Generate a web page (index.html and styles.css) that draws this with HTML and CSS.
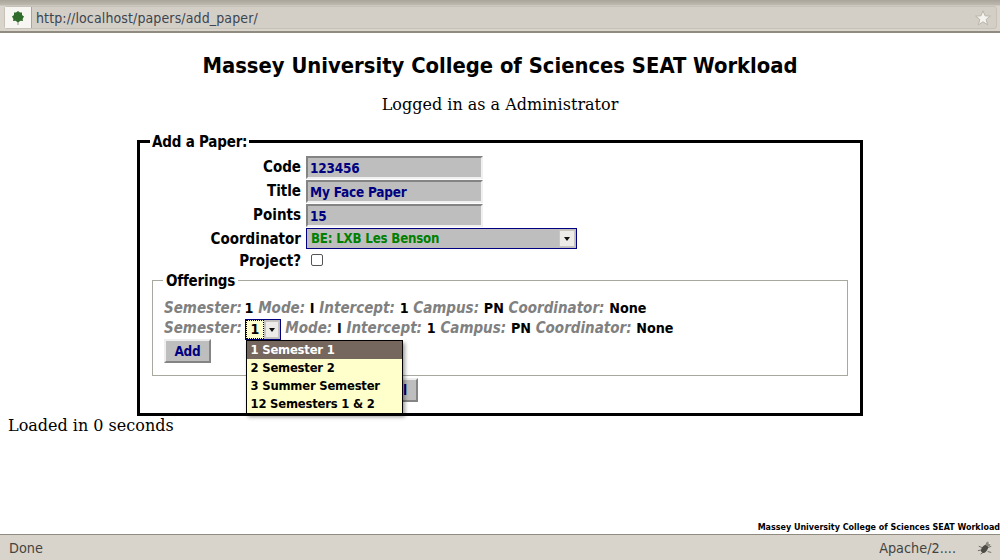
FILE: index.html
```html
<!DOCTYPE html>
<html lang="en">
<head>
<meta charset="utf-8">
<title>Massey University College of Sciences SEAT Workload</title>
<link rel="stylesheet" href="styles.css">
</head>
<body>
<header class="browser-bar">
  <div class="url-box">
    <span class="site-icon">
      <svg width="16" height="16" viewBox="0 0 16 16"><path fill="#8a9a80" d="M7.5 11h1v4h-1z"/><path fill="#2f6b2a" d="M8 1 10 2.6 12 2.4 12 5 14 6.6 12.6 9 13 11 10.5 10.8 8 12.4 5.5 10.8 3 11 3.4 9 2 6.6 4 5 4 2.4 6 2.6Z"/></svg>
    </span>
    <span class="url">http://localhost/papers/add_paper/</span>
    <svg class="star" width="16" height="16" viewBox="0 0 16 16"><path fill="#f4f3f0" stroke="#b9b5aa" d="M8 .8 10 5.8 15.4 6.1 11.2 9.4 12.6 14.8 8 11.8 3.4 14.8 4.8 9.4 .6 6.1 6 5.8Z"/></svg>
  </div>
</header>
<main class="page">
  <h1 class="title">Massey University College of Sciences SEAT Workload</h1>
  <p class="login">Logged in as a Administrator</p>
  <form class="paper-form">
    <fieldset class="outer">
      <legend class="outer-legend">Add a Paper:</legend>
      <div class="fields">
        <label class="lbl">Code</label><input class="text" value="123456">
        <label class="lbl">Title</label><input class="text" value="My Face Paper">
        <label class="lbl">Points</label><input class="text" value="15">
        <label class="lbl">Coordinator</label>
        <div class="select wide"><span class="select-val green">BE: LXB Les Benson</span><span class="arrow"></span></div>
        <label class="lbl">Project?</label><div class="check-cell"><span class="check"></span></div>
      </div>
      <fieldset class="offerings">
        <legend class="off-legend">Offerings</legend>
        <div class="off-row"><em class="sem">Semester:</em> 1 <em>Mode:</em> I <em>Intercept:</em> 1 <em>Campus:</em> PN <em>Coordinator:</em> None</div>
        <div class="off-row second"><em class="sem">Semester:</em>
          <span class="select small"><span class="select-val focus">1</span><span class="arrow"></span>
            <span class="popup">
              <span class="opt on">1 Semester 1</span>
              <span class="opt">2 Semester 2</span>
              <span class="opt">3 Summer Semester</span>
              <span class="opt">12 Semesters 1 &amp; 2</span>
            </span>
          </span>
          <em>Mode:</em> I <em>Intercept:</em> 1 <em>Campus:</em> PN <em>Coordinator:</em> None</div>
        <button type="button" class="btn add">Add</button>
      </fieldset>
      <div class="actions"><button type="button" class="btn cancel">Cancel</button></div>
    </fieldset>
  </form>
  <p class="loaded">Loaded in 0 seconds</p>
  <div class="spacer"></div>
  <div class="foot">Massey University College of Sciences SEAT Workload</div>
</main>
<footer class="status">
  <span class="done">Done</span>
  <span class="apache">Apache/2....</span>
  <svg width="16" height="16" viewBox="0 0 18 18"><g stroke="#66645c" stroke-width="1" fill="none"><path d="M2 7 7 9M1 12 6 11M4 16 8 13M10 5 12 2M11 9 16 7M12 13 16 14"/></g><ellipse cx="8.5" cy="10" rx="3.2" ry="5" transform="rotate(35 8.5 10)" fill="#4d4b45"/><circle cx="12.5" cy="5" r="2.4" fill="#8d8a80"/><circle cx="14" cy="3.5" r="1" fill="#eee"/></svg>
</footer>
</body>
</html>
```
FILE: styles.css
```css
* { box-sizing: border-box; }
html, body { height: 100%; }
body {
  margin: 0;
  height: 560px;
  overflow: hidden;
  display: flex;
  flex-direction: column;
  font-family: "DejaVu Serif", serif;
  font-size: 16px;
  color: #000;
  background: #fff;
}
.browser-bar {
  height: 33px;
  padding: 6px 3px 2px 4px;
  flex: none;
  background: linear-gradient(#a9a59b 0, #bdb9af 5px, #d9d5cc 6px);
  border-bottom: 2px solid #8f8b80;
}
.url-box {
  height: 23px;
  display: flex;
  align-items: center;
  background: #d3cfc6;
  border: 1px solid #c6c2b8;
  border-radius: 3px;
  padding-right: 5px;
}
.site-icon {
  width: 27px;
  height: 21px;
  display: flex;
  align-items: center;
  justify-content: center;
  background: #f7f6f3;
  border-right: 1px solid #a9a59b;
  margin-right: 4px;
}
.url {
  flex: 1;
  font: 14px "DejaVu Sans Condensed", "DejaVu Sans", sans-serif;
  letter-spacing: .12px;
  color: #3c4450;
}
.star { flex: none; }
.page {
  flex: 1;
  min-height: 0;
  display: flex;
  flex-direction: column;
  font-size: 16px;
}
.title {
  margin: 18px 0 0;
  height: 29px;
  text-align: center;
  font: bold 21.8px/29px "DejaVu Sans Condensed", "DejaVu Sans", sans-serif;
}
.login {
  margin: 15px 0 0;
  height: 20px;
  line-height: 20px;
  text-align: center;
}
.paper-form { margin: 16px 137px 0; }
.outer {
  margin: 0;
  padding: 0 12px 0 12px;
  height: 285px;
  border: 3px solid #000;
  font: bold 15px "DejaVu Sans Condensed", "DejaVu Sans", sans-serif;
}
.outer-legend { padding: 2px 2px 0; margin-left: -2px; line-height: 19px; letter-spacing: -.2px; }
.fields {
  display: grid;
  grid-template-columns: 149px 1fr;
  column-gap: 5px;
  grid-template-rows: 24px 24px 24px 22px 22px;
  margin-top: 4px;
}
.lbl { text-align: right; line-height: 23px; }
.text {
  width: 177px;
  height: 23px;
  padding: 1px 2px 0;
  border: 2px solid;
  border-color: #848484 #f0f0f0 #f0f0f0 #848484;
  background: #bebebe;
  color: #000080;
  font: bold 13.5px "DejaVu Sans Condensed", "DejaVu Sans", sans-serif;
  letter-spacing: -.2px;
}
.select {
  display: inline-flex;
  align-items: center;
  height: 21px;
  border: 1px solid #000080;
  background: #bebebe;
  font-size: 13.2px;
  letter-spacing: -.2px;
  word-spacing: 0;
}
.wide { width: 271px; padding-right: 1px; }
.select-val { flex: 1; padding-left: 4px; }
.green { color: #008000; }
.arrow {
  position: relative;
  flex: none;
  width: 16px;
  height: 17px;
  background: #eeece8;
  border: 1px solid #c9c6bf;
}
.arrow::after {
  content: "";
  position: absolute;
  left: 4px;
  top: 6px;
  border: 3px solid transparent;
  border-top: 4px solid #111;
  border-bottom: 0;
}
.check-cell { display: flex; align-items: center; padding: 0 0 3px 5px; }
.check {
  width: 12px;
  height: 12px;
  border: 1px solid #555;
  border-radius: 2px;
  background: #fff;
}
.offerings {
  margin: -2px 0 0;
  padding: 7px 11px 0;
  height: 106px;
  border: 1px solid #a8a8a0;
  font-size: 14.2px;
}
.off-legend { padding: 2px 3px 0; margin-left: -1px; font-size: 15px; line-height: 19px; letter-spacing: -.2px; }
.off-row { height: 20px; line-height: 20px; white-space: nowrap; word-spacing: .3px; }
em { color: #808080; font-style: italic; font-size: 15px; }
.sem { margin-right: -2px; }
.small {
  position: relative;
  width: 36px;
  height: 21px;
  vertical-align: middle;
  padding-right: 1px;
}
.small .select-val { padding-left: 5px; color: #000; background: #ffffcc; height: 19px; line-height: 19px; font-size: 14px; outline: 1px dotted #000; outline-offset: -1px; }
.small .arrow { width: 14px; height: 17px; margin-left: 1px; }
.small .arrow::after { left: 3px; }
.popup {
  position: absolute;
  z-index: 5;
  left: 0;
  top: 20px;
  width: 157px;
  display: flex;
  flex-direction: column;
  background: #ffffcc;
  border: 1px solid #000;
  box-shadow: 2px 3px 4px rgba(0,0,0,.4);
  font-size: 12.9px;
}
.opt { height: 18px; line-height: 18px; padding-left: 4px; white-space: nowrap; }
.on { background: #76675e; color: #fff; }
.btn {
  height: 24px;
  padding: 0;
  border: 2px solid;
  border-color: #eeeeee #848484 #848484 #eeeeee;
  background: #bebebe;
  color: #000080;
  font: bold 13.5px "DejaVu Sans Condensed", "DejaVu Sans", sans-serif;
  letter-spacing: -.2px;
}
.add { width: 47px; margin-top: 1px; }
.actions {
  display: flex;
  margin: 2px 0 0 196px;
}
.cancel { width: 70px; text-align: right; padding-right: 9px; }
.loaded { margin: 0 0 0 8px; height: 20px; line-height: 20px; }
.spacer { flex: 1; }
.foot {
  height: 14px;
  text-align: right;
  font: bold 8.9px/14px "DejaVu Sans Condensed", "DejaVu Sans", sans-serif;
}
.status {
  flex: none;
  height: 26px;
  display: flex;
  align-items: center;
  padding: 0 7px 0 9px;
  background: #d8d4cb;
  border-top: 1px solid #8f8b80;
  font: 14.3px "DejaVu Sans Condensed", "DejaVu Sans", sans-serif;
  color: #44433e;
}
.done { flex: 1; }
.apache { margin-right: 21px; }
```
